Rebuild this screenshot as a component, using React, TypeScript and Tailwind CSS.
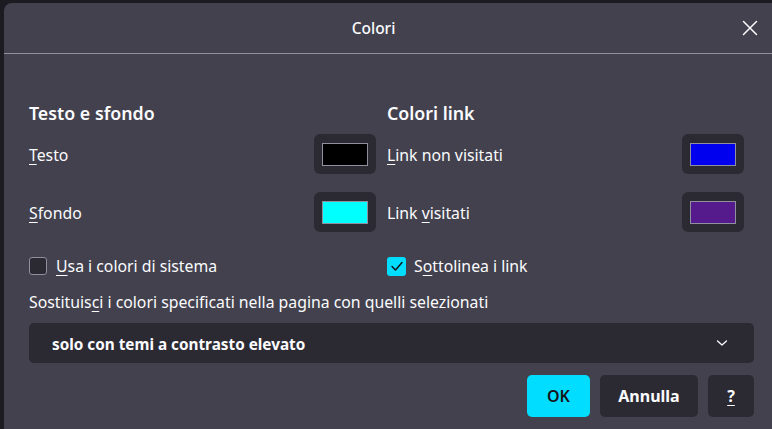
import React from "react";

const font = { fontFamily: '"Noto Sans", "Open Sans", sans-serif' };

function U({ children }: { children: React.ReactNode }) {
  return <span className="underline underline-offset-[3px] decoration-1">{children}</span>;
}

function Swatch({ color }: { color: string }) {
  return (
    <div className="w-[62px] h-[40px] bg-[#2b2a33] rounded-[6px] flex items-center justify-center mr-[10px] shrink-0">
      <div className="w-[46px] h-[23px] border border-[#8f8f9d]" style={{ backgroundColor: color }} />
    </div>
  );
}

function Row({ label, color }: { label: React.ReactNode; color: string }) {
  return (
    <div className="flex items-center justify-between h-[40px]">
      <div className="text-[15.8px] leading-[20px] mt-[2px]">{label}</div>
      <Swatch color={color} />
    </div>
  );
}

export default function App() {
  return (
    <div className="w-[772px] h-[429px] bg-[#1c1b22] overflow-hidden flex text-[#fbfbfe]" style={font}>
      <div className="w-[4px] shrink-0" />
      <div className="mt-[3px] w-[775px] shrink-0 bg-[#42414d] rounded-t-[8px] flex flex-col">
        <div className="h-[51px] flex items-center pl-[5px] pr-[17px] border-b border-[#8f8f9d]">
          <div className="flex-1 text-center text-[15.5px] font-medium mt-[1px]">Colori</div>
          <button className="w-[24px] h-[24px] flex items-center justify-center">
            <svg width="16" height="16" viewBox="0 0 16 16" fill="none" stroke="#fbfbfe" strokeWidth="1.5" strokeLinecap="round">
              <path d="M1.5 1.5 L14.5 14.5 M14.5 1.5 L1.5 14.5" />
            </svg>
          </button>
        </div>
        <div className="px-[25px] flex flex-col">
          <div className="grid grid-cols-[357px_367px] gap-x-[1px] mt-[47px]">
            <div className="flex flex-col">
              <div className="text-[17.8px] leading-[24px] font-semibold">Testo e sfondo</div>
              <div className="mt-[9px]">
                <Row label={<><U>T</U>esto</>} color="#000000" />
              </div>
              <div className="mt-[18px]">
                <Row label={<><U>S</U>fondo</>} color="#00ffff" />
              </div>
              <div className="mt-[24px] flex items-center h-[20px] gap-[9px]">
                <div className="w-[18px] h-[18px] rounded-[3px] border border-[#8f8f9d] bg-[#2b2a33]" />
                <div className="text-[15.8px] leading-[20px]"><U>U</U>sa i colori di sistema</div>
              </div>
            </div>
            <div className="flex flex-col">
              <div className="text-[17.8px] leading-[24px] font-semibold">Colori link</div>
              <div className="mt-[9px]">
                <Row label={<><U>L</U>ink non visitati</>} color="#0000ee" />
              </div>
              <div className="mt-[18px]">
                <Row label={<>Link <U>v</U>isitati</>} color="#551a8b" />
              </div>
              <div className="mt-[24px] flex items-center h-[20px] gap-[8px]">
                <div className="w-[19px] h-[19px] rounded-[3px] bg-[#00ddff] flex items-center justify-center">
                  <svg width="14" height="14" viewBox="0 0 14 14" fill="none" stroke="#15141a" strokeWidth="1.5" strokeLinecap="round" strokeLinejoin="round">
                    <path d="M2 7.5 L5.5 11 L12 3.5" />
                  </svg>
                </div>
                <div className="text-[15.8px] leading-[20px]">S<U>o</U>ttolinea i link</div>
              </div>
            </div>
          </div>
          <div className="mt-[16px] text-[15.8px] leading-[20px]">Sostituis<U>c</U>i i colori specificati nella pagina con quelli selezionati</div>
          <div className="mt-[11px] h-[40px] bg-[#2b2a33] rounded-[5px] flex items-center pl-[23px] pr-[26px]">
            <div className="flex-1 text-[15.3px] font-bold mt-[2px]">solo con temi a contrasto elevato</div>
            <svg width="12" height="8" viewBox="0 0 12 8" fill="none" stroke="#fbfbfe" strokeWidth="1.3" strokeLinecap="round" strokeLinejoin="round">
              <path d="M1.5 2 L6 6 L10.5 2" />
            </svg>
          </div>
          <div className="mt-[12px] flex justify-end gap-[10px]">
            <button className="w-[63px] h-[42px] rounded-[5px] bg-[#00ddff] text-[#15141a] text-[16px] font-semibold">OK</button>
            <button className="w-[98px] h-[42px] rounded-[5px] bg-[#2b2a33] text-[16px] font-bold">Annulla</button>
            <button className="w-[46px] h-[42px] rounded-[5px] bg-[#2b2a33] text-[16px] font-bold"><U>?</U></button>
          </div>
        </div>
      </div>
    </div>
  );
}
